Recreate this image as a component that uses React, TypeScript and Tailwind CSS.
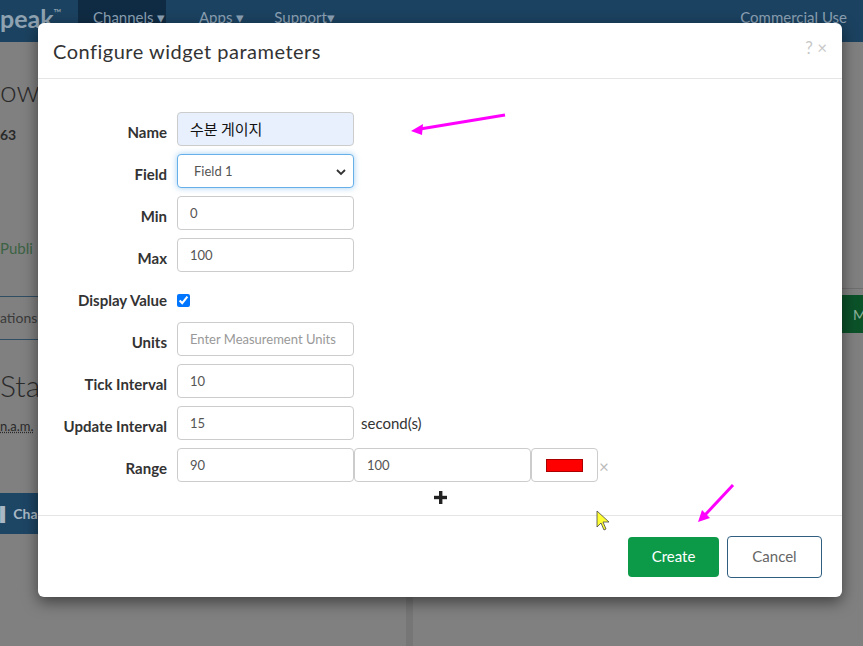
import React from 'react';

const label = "w-[129px] shrink-0 text-right pt-[10px] leading-[20px] text-[15px] font-bold text-[#333]";
const box = "h-[34px] w-[177px] shrink-0 rounded-[4px] border pl-[12px] pt-[1px] text-[13px] flex items-center";
const input = box + " border-[#ccc] bg-white text-[#555]";

const Row = ({ name, children }: { name: string; children: React.ReactNode }) => (
    <div className="flex h-[34px] items-start">
        <div className={label}>{name}</div>
        <div className="ml-[10px] flex h-[34px] items-center">{children}</div>
    </div>
);

export default function App() {
    return (
        <div className="relative h-[646px] w-[863px] overflow-hidden bg-[#808080] font-['Lato',sans-serif]">
            {/* page behind the overlay */}
            <nav className="flex h-[42px] items-stretch bg-[#1b4260] text-[15px] text-[#8ba0b3]">
                <div className="flex w-[78px] items-center pb-[6px] text-[25px] font-bold leading-none text-[#8fa2b1]">
                    peak<sup className="text-[11px] font-normal">™</sup>
                </div>
                <div className="flex w-[88px] items-center bg-[#0f2b43] pb-[8px] pl-[15px]">Channels ▾</div>
                <div className="ml-[33px] flex items-center pb-[8px]">Apps ▾</div>
                <div className="ml-[30px] flex items-center pb-[8px]">Support▾</div>
                <div className="ml-auto mr-[16px] flex items-center pb-[8px]">Commercial Use</div>
            </nav>
            <div className="flex h-[604px]">
                <div className="w-[406px] shrink-0 text-[#2a2a2a]">
                    <div className="mt-[30px] text-[30px] font-light leading-[36px]">ow</div>
                    <div className="mt-[16px] text-[14px] font-bold">63</div>
                    <div className="mt-[92px] text-[15px] text-[#3c6344]">Publi</div>
                    <div className="mt-[36px] border-t border-[#2f4d63]" />
                    <div className="mt-[10px] text-[14px] text-[#3a3a3a]">ations</div>
                    <div className="mt-[11px] border-t border-[#2f4d63]" />
                    <div className="mt-[27px] text-[30px] font-light leading-[36px]">Stat</div>
                    <div className="mt-[14px] text-[13px] underline decoration-dotted">n.a.m.</div>
                    <div className="mt-[57px] flex h-[41px] w-[140px] items-center bg-[#1d4564] text-[14px] font-bold text-[#a9b8c4]">
                        ▌ Channel
                    </div>
                </div>
                <div className="w-[7px] shrink-0 bg-[#767676]" />
                <div className="flex-1">
                    <div className="mt-[246px] border-t border-[#6f6f6f]" />
                    <div className="mt-[6px] ml-[429px] flex h-[38px] items-center bg-[#0b5229] pl-[11px] text-[14px] text-[#8fb39c]">
                        M
                    </div>
                </div>
            </div>

            {/* modal */}
            <div className="absolute left-[38px] top-[23px] flex h-[574px] w-[804px] flex-col rounded-[6px] bg-white shadow-[0_5px_15px_rgba(0,0,0,0.5)]">
                <div className="flex h-[56px] items-center justify-between border-b border-[#e5e5e5] px-[15px]">
                    <h4 className="text-[20px] tracking-[0.5px] text-[#333]">Configure widget parameters</h4>
                    <div className="mb-[6px] text-[17px] text-[#c8c8c8]">? ×</div>
                </div>
                <div className="flex flex-1 flex-col gap-2 pt-[33px]">
                    <Row name="Name">
                        <div className={box + " border-[#ccc] bg-[#e8f0fe] text-[15px] text-[#111] font-['Noto_Sans_CJK_KR',sans-serif]"}>수분 게이지</div>
                    </Row>
                    <Row name="Field">
                        <div className={box + " justify-between border-[#66afe9] bg-white text-[#555] pl-[16px] pr-[6px] shadow-[0_0_6px_rgba(102,175,233,0.6)]"}>
                            <span>Field 1</span>
                            <svg width="12" height="12" viewBox="0 0 12 12">
                                <path d="M2 4l4 4 4-4" fill="none" stroke="#333" strokeWidth="1.8" />
                            </svg>
                        </div>
                    </Row>
                    <Row name="Min">
                        <div className={input}>0</div>
                    </Row>
                    <Row name="Max">
                        <div className={input}>100</div>
                    </Row>
                    <Row name="Display Value">
                        <input type="checkbox" checked readOnly className="mt-[6px] h-[13px] w-[13px] accent-[#0075ff]" />
                    </Row>
                    <Row name="Units">
                        <div className={box + " border-[#ccc] bg-white text-[#999]"}>Enter Measurement Units</div>
                    </Row>
                    <Row name="Tick Interval">
                        <div className={input}>10</div>
                    </Row>
                    <Row name="Update Interval">
                        <div className={input}>15</div>
                        <span className="ml-[7px] text-[15px] text-[#333]">second(s)</span>
                    </Row>
                    <Row name="Range">
                        <div className={input}>90</div>
                        <div className={input}>100</div>
                        <div className="flex h-[34px] w-[67px] items-center justify-center rounded-[4px] border border-[#ccc]">
                            <div className="h-[13px] w-[37px] border border-[#a00] bg-[#ff0000]" />
                        </div>
                        <span className="ml-[1px] mt-[2px] text-[17px] leading-none text-[#bbb]">×</span>
                    </Row>
                    <div className="flex justify-center pt-[1px]">
                        <svg width="13" height="13" viewBox="0 0 13 13">
                            <rect x="5" y="0" width="3.4" height="13" fill="#222" />
                            <rect x="0" y="4.8" width="13" height="3.4" fill="#222" />
                        </svg>
                    </div>
                </div>
                <div className="flex h-[82px] items-center justify-end gap-2 border-t border-[#e5e5e5] pr-[20px]">
                    <button className="h-[40px] w-[91px] rounded-[4px] bg-[#0c9a49] text-[15px] text-white">Create</button>
                    <button className="h-[42px] w-[95px] rounded-[4px] border border-[#2f5e80] bg-white text-[15px] text-[#666]">Cancel</button>
                </div>
            </div>

            {/* annotation arrows and cursor */}
            <svg className="pointer-events-none absolute left-0 top-0" width="863" height="646">
                <line x1="505" y1="115" x2="420" y2="129" stroke="#ff00ff" strokeWidth="3" />
                <path d="M411 131 L423 124 L422 135 Z" fill="#ff00ff" />
                <line x1="733" y1="485" x2="705" y2="515" stroke="#ff00ff" strokeWidth="3" />
                <path d="M698 522 L702 510 L710 518 Z" fill="#ff00ff" />
                <path d="M597 511 L597 527 L601 523 L604 530 L606 529 L603 522 L609 522 Z" fill="#ffff33" stroke="#444" strokeWidth="0.8" />
            </svg>
        </div>
    );
}
